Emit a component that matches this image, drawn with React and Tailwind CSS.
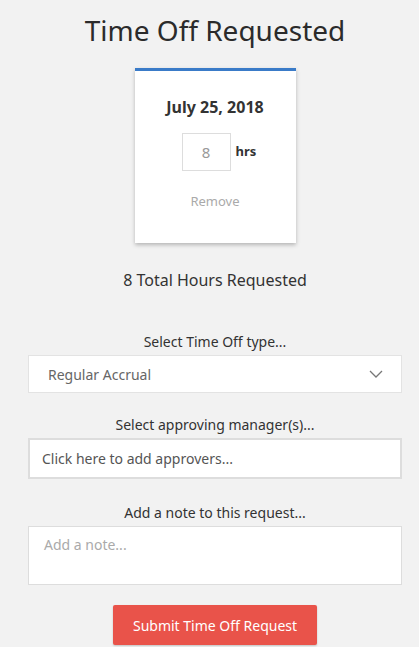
import React from "react";

export default function App() {
  return (
    <div className="min-h-[647px] w-[419px] pl-[11px] bg-[#f2f2f2] font-[family-name:'Liberation_Sans',Arial,sans-serif] text-[#333] flex flex-col items-center">
      <h1 className="mt-[12px] text-[28px] leading-[36px] text-[#2b2b2b]">Time Off Requested</h1>
      <div className="mt-[20px] w-[161px] h-[175px] bg-white border-t-[3px] border-[#3a7bc8] shadow-[0_2px_4px_rgba(0,0,0,0.25)] flex flex-col items-center">
        <div className="mt-[26px] text-[16px] leading-[20px] font-bold text-[#333]">July 25, 2018</div>
        <div className="mt-[16px] flex items-center gap-[5px] ml-[8px]">
          <div className="w-[49px] h-[38px] border border-[#ddd] flex items-center justify-center text-[15px] text-[#999]">8</div>
          <span className="text-[13px] font-bold">hrs</span>
        </div>
        <div className="mt-[22px] text-[13px] leading-[16px] text-[#aaa]">Remove</div>
      </div>
      <div className="mt-[27px] text-[16px] leading-[20px] text-[#333]">8 Total Hours Requested</div>
      <div className="mt-[44px] text-[14px] leading-[16px] text-[#333]">Select Time Off type...</div>
      <div className="mt-[5px] w-[374px] h-[38px] bg-white border border-[#e3e3e3] flex items-center justify-between pl-[19px] pr-[18px] text-[14px] text-[#666]">
        <span>Regular Accrual</span>
        <svg width="14" height="8" viewBox="0 0 14 8" fill="none" stroke="#777" strokeWidth="1.3"><path d="M1 1l6 6 6-6" /></svg>
      </div>
      <div className="mt-[24px] text-[14px] leading-[16px] text-[#333]">Select approving manager(s)...</div>
      <div className="mt-[5px] w-[374px] h-[41px] bg-white border-2 border-[#ddd] flex items-center pl-[12px] text-[14px] text-[#555]">Click here to add approvers...</div>
      <div className="mt-[26px] text-[14px] leading-[16px] text-[#333]">Add a note to this request...</div>
      <div className="mt-[5px] w-[374px] h-[59px] bg-white border border-[#ddd] pl-[15px] pt-[10px] text-[14px] leading-[16px] text-[#aaa]">Add a note...</div>
      <button className="mt-[20px] w-[204px] h-[40px] bg-[#e9534a] text-white text-[14px] rounded-[2px] shadow-[0_1px_2px_rgba(0,0,0,0.2)]">Submit Time Off Request</button>
    </div>
  );
}
